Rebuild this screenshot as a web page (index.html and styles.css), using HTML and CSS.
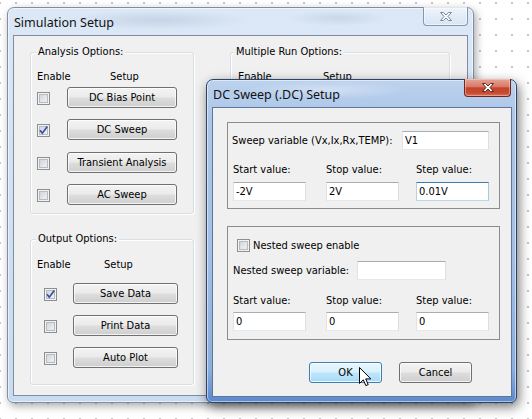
FILE: index.html
```html
<!DOCTYPE html>
<html>
<head>
<meta charset="utf-8">
<title>Simulation Setup</title>
<link rel="stylesheet" href="styles.css">
</head>
<body>
<div class="win win-main">
  <div class="titlebar">
    <span class="title">Simulation Setup</span>
    <span class="close close-inactive">
      <svg width="12" height="9" viewBox="0 0 12 9"><polygon points="0.5,0.5 3.5,0.5 6,3 8.5,0.5 11.5,0.5 8,4.5 11.5,8.5 8.5,8.5 6,6 3.5,8.5 0.5,8.5 4,4.5" fill="#f7f9fc" stroke="#7d8796" stroke-width="1" stroke-linejoin="round"/></svg>
    </span>
  </div>
  <div class="client main-client">
    <div class="col-left">
      <div class="group g-analysis">
        <div class="group-title">Analysis Options:</div>
        <div class="hdr hdr-a"><span class="hdr-en">Enable</span><span>Setup</span></div>
        <div class="rows rows-a">
          <span class="cb"></span><button class="btn">DC Bias Point</button>
          <span class="cb"><svg width="11" height="11" viewBox="0 0 11 11"><path d="M2,5.2 L4.3,8.2 L9.3,1.6" fill="none" stroke="#3352a3" stroke-width="1.7"/></svg></span><button class="btn">DC Sweep</button>
          <span class="cb"></span><button class="btn">Transient Analysis</button>
          <span class="cb"></span><button class="btn">AC Sweep</button>
        </div>
      </div>
      <div class="group g-output">
        <div class="group-title">Output Options:</div>
        <div class="hdr hdr-o"><span class="hdr-en">Enable</span><span>Setup</span></div>
        <div class="rows rows-o">
          <span class="cb"><svg width="11" height="11" viewBox="0 0 11 11"><path d="M2,5.2 L4.3,8.2 L9.3,1.6" fill="none" stroke="#3352a3" stroke-width="1.7"/></svg></span><button class="btn">Save Data</button>
          <span class="cb"></span><button class="btn">Print Data</button>
          <span class="cb"></span><button class="btn">Auto Plot</button>
        </div>
      </div>
    </div>
    <div class="group g-multi">
      <div class="group-title">Multiple Run Options:</div>
      <div class="hdr hdr-m"><span class="hdr-en">Enable</span><span>Setup</span></div>
    </div>
  </div>
</div>

<div class="win win-dlg">
  <div class="titlebar">
    <span class="title">DC Sweep (.DC) Setup</span>
    <span class="close close-active">
      <svg width="12" height="9" viewBox="0 0 12 9"><polygon points="0.5,0.5 3.5,0.5 6,3 8.5,0.5 11.5,0.5 8,4.5 11.5,8.5 8.5,8.5 6,6 3.5,8.5 0.5,8.5 4,4.5" fill="#ffffff" stroke="#5a2a24" stroke-width="1" stroke-linejoin="round"/></svg>
    </span>
  </div>
  <div class="client dlg-client">
    <div class="dgroup dg1">
      <div class="var-row">
        <span>Sweep variable (Vx,Ix,Rx,TEMP):</span>
        <input class="tb tb-var" type="text" value="V1">
      </div>
      <div class="vals">
        <span>Start value:</span><span>Stop value:</span><span>Step value:</span>
        <input class="tb" type="text" value="-2V"><input class="tb" type="text" value="2V"><input class="tb focus" type="text" value="0.01V">
      </div>
    </div>
    <div class="dgroup dg2">
      <div class="nest-row"><span class="cb"></span><span>Nested sweep enable</span></div>
      <div class="nvar-row">
        <span>Nested sweep variable:</span>
        <input class="tb tb-nvar" type="text" value="">
      </div>
      <div class="vals vals2">
        <span>Start value:</span><span>Stop value:</span><span>Step value:</span>
        <input class="tb" type="text" value="0"><input class="tb" type="text" value="0"><input class="tb" type="text" value="0">
      </div>
    </div>
    <div class="dlg-buttons">
      <button class="btn dbtn hover">OK</button>
      <button class="btn dbtn">Cancel</button>
    </div>
  </div>
</div>

<svg class="cursor" width="13" height="20" viewBox="0 0 13 20"><polygon points="0.5,0.5 0.5,16.5 4.3,12.8 6.8,18.6 9.2,17.6 6.7,11.9 11.8,11.9" fill="#ffffff" stroke="#000000" stroke-width="1" stroke-linejoin="miter"/></svg>
</body>
</html>
```
FILE: styles.css
```css
* { box-sizing: border-box; }
html, body { margin: 0; padding: 0; }
body {
  width: 532px;
  height: 419px;
  overflow: hidden;
  position: relative;
  background-color: #ffffff;
  background-image: radial-gradient(circle at center, #b4b4b4 0, #b4b4b4 0.6px, rgba(255,255,255,0) 1.1px);
  background-size: 16px 16px;
  background-position: -8px -5px;
  font-family: "DejaVu Sans Condensed", "DejaVu Sans", sans-serif;
  font-stretch: condensed;
  font-size: 11px;
  color: #000;
}

/* ---------- windows ---------- */
.win {
  position: absolute;
  display: flex;
  flex-direction: column;
  border: 1px solid;
  border-radius: 7px 7px 6px 6px;
}
.win-main {
  left: 7px;
  top: 7px;
  width: 467px;
  height: 396px;
  padding: 0 5px 6px 5px;
  border-color: #7f8ea3;
  background:
    radial-gradient(ellipse 90px 10px at 150px 12px, rgba(120,140,170,0.22), rgba(120,140,170,0)),
    radial-gradient(ellipse 50px 8px at 330px 10px, rgba(120,140,170,0.18), rgba(120,140,170,0)),
    linear-gradient(180deg, #dce8f6 0%, #d2e1f3 40%, #c9dbf0 100%);
  box-shadow: inset 0 0 0 1px rgba(255,255,255,0.55), 2px 3px 9px rgba(0,0,0,0.35);
}
.win-dlg {
  left: 206px;
  top: 79px;
  width: 311px;
  height: 324px;
  padding: 0 4px 5px 5px;
  border-color: #2f4264;
  background:
    radial-gradient(ellipse 80px 9px at 120px 10px, rgba(255,255,255,0.35), rgba(255,255,255,0)),
    linear-gradient(180deg, #bcd2ee 0%, #abc6e8 12%, #a2bfe6 55%, #8aaedd 90%, #5a89cf 100%);
  box-shadow: inset 0 0 0 1px rgba(255,255,255,0.5), 2px 4px 12px rgba(0,0,0,0.55);
}
.titlebar {
  height: 27px;
  display: flex;
  align-items: center;
  padding-left: 1px;
  flex: none;
}
.title {
  font-family: "Noto Sans", "Open Sans", sans-serif;
  font-stretch: normal;
  font-size: 12.5px;
  color: #111;
  white-space: nowrap;
  padding-top: 1px;
}
.close {
  margin-left: auto;
  align-self: flex-start;
  margin-top: -1px;
  display: flex;
  align-items: center;
  justify-content: center;
  border: 1px solid;
  border-top: none;
  border-radius: 0 0 4px 4px;
}
.close-inactive {
  width: 45px;
  height: 19px;
  border-color: #8796ac;
  background: linear-gradient(180deg, rgba(255,255,255,0.55) 0%, rgba(235,242,250,0.45) 50%, rgba(215,228,244,0.5) 100%);
  box-shadow: inset 0 0 0 1px rgba(255,255,255,0.5);
}
.close-active {
  width: 47px;
  height: 18px;
  margin-right: 1px;
  border-color: #6a2a22;
  background: linear-gradient(180deg, #e8a496 0%, #d77a67 45%, #c5432c 52%, #c94a30 80%, #d96d4f 100%);
  box-shadow: inset 0 0 0 1px rgba(255,220,210,0.45);
}

.client {
  flex: 1;
  background: #f0f0f0;
  border: 1px solid #7e8c9f;
}

/* ---------- main window content ---------- */
.main-client {
  display: flex;
  align-items: flex-start;
  padding: 16px 0 0 16px;
}
.col-left {
  display: flex;
  flex-direction: column;
  gap: 25px;
}
.group {
  border: 1px solid #d5dfe5;
  border-radius: 3px;
  box-shadow: inset 1px 1px 0 #ffffff, 1px 1px 0 #ffffff;
}
.group-title {
  margin: -8px 0 0 5px;
  padding: 0 2px;
  line-height: 14px;
  background: #f0f0f0;
  width: max-content;
}
.g-analysis { width: 164px; height: 162px; }
.g-output { width: 164px; height: 146px; }
.g-multi { width: 220px; height: 162px; margin-left: 36px; }
.g-multi .group-title { margin-left: 3px; }

.hdr {
  display: flex;
  line-height: 14px;
  padding-left: 6px;
  white-space: nowrap;
}
.hdr-a { margin-top: 11px; }
.hdr-a .hdr-en { width: 73px; }
.hdr-o { margin-top: 12px; }
.hdr-o .hdr-en { width: 67px; }
.hdr-m { margin-top: 11px; padding-left: 7px; }
.hdr-m .hdr-en { width: 85px; }

.rows {
  display: grid;
  align-items: center;
  padding-left: 6px;
}
.rows-a {
  margin-top: 3px;
  grid-template-columns: 30px 110px;
  grid-auto-rows: 21px;
  row-gap: 11.3px;
}
.rows-o {
  margin-top: 11px;
  grid-template-columns: 36px 105px;
  grid-auto-rows: 21px;
  row-gap: 11px;
}
.rows-o .cb { margin-left: 7px; }
.rows .cb { margin-top: 2px; }

.btn {
  height: 21px;
  margin: 0;
  padding: 0;
  border: 1px solid #707070;
  border-radius: 3px;
  background: linear-gradient(180deg, #f3f3f3 0%, #ebebeb 48%, #dddddd 52%, #cfcfcf 100%);
  box-shadow: inset 0 0 0 1px rgba(255,255,255,0.75);
  font: inherit;
  color: #000;
  text-align: center;
  white-space: nowrap;
}

.cb {
  display: block;
  width: 13px;
  height: 13px;
  border: 1px solid #8e8f8f;
  background: linear-gradient(135deg, #c8ccd2 0%, #e4e6e9 55%, #f5f5f5 100%);
  box-shadow: inset 0 0 0 1px #f2f2f2, inset 0 0 0 2px #b7bcc2;
}
.cb svg { display: block; }

/* ---------- dialog content ---------- */
.dlg-client {
  display: flex;
  flex-direction: column;
  padding: 14px 0 0 14px;
  border-color: #5f7698;
}
.dgroup {
  width: 273px;
  border: 1px solid #8c8c8c;
  flex: none;
}
.dg1 { height: 87px; }
.dg2 { height: 114px; margin-top: 17px; }

.var-row {
  display: flex;
  align-items: center;
  justify-content: space-between;
  margin-top: 8px;
  padding: 0 10px 0 4px;
  white-space: nowrap;
}
.vals {
  display: grid;
  grid-template-columns: 93px 90px 73px;
  grid-template-rows: 14px 19px;
  row-gap: 5px;
  padding-left: 5px;
  margin-top: 13px;
  line-height: 14px;
  white-space: nowrap;
}
.vals2 { margin-top: 14px; row-gap: 4px; }

.tb {
  display: block;
  height: 19px;
  width: 73px;
  margin: 0;
  padding: 0 0 0 2px;
  border: 1px solid;
  border-color: #abadb3 #dbdfe6 #e3e9ef #e2e3ea;
  background: #fff;
  font: inherit;
  color: #000;
  outline: none;
}
.tb.focus { border-color: #3d7bad #a4c9e3 #b7d9ed #b5cfe7; }
.tb-var { width: 87px; }
.tb-nvar { width: 89px; }

.nest-row {
  display: flex;
  align-items: center;
  gap: 3px;
  margin-top: 12px;
  padding-left: 9px;
  line-height: 13px;
}
.nvar-row {
  display: grid;
  grid-template-columns: 124px 89px;
  align-items: center;
  margin-top: 9px;
  padding-left: 5px;
  white-space: nowrap;
}

.dlg-buttons {
  display: flex;
  justify-content: flex-end;
  gap: 17px;
  margin-top: 22px;
  padding-right: 39px;
}
.dbtn { width: 73px; }
.dbtn.hover {
  border-color: #3c7fb1;
  background: linear-gradient(180deg, #eaf6fd 0%, #d9f0fc 48%, #bee6fd 52%, #a7d9f5 100%);
}

.cursor {
  position: absolute;
  left: 359px;
  top: 367px;
}
```
